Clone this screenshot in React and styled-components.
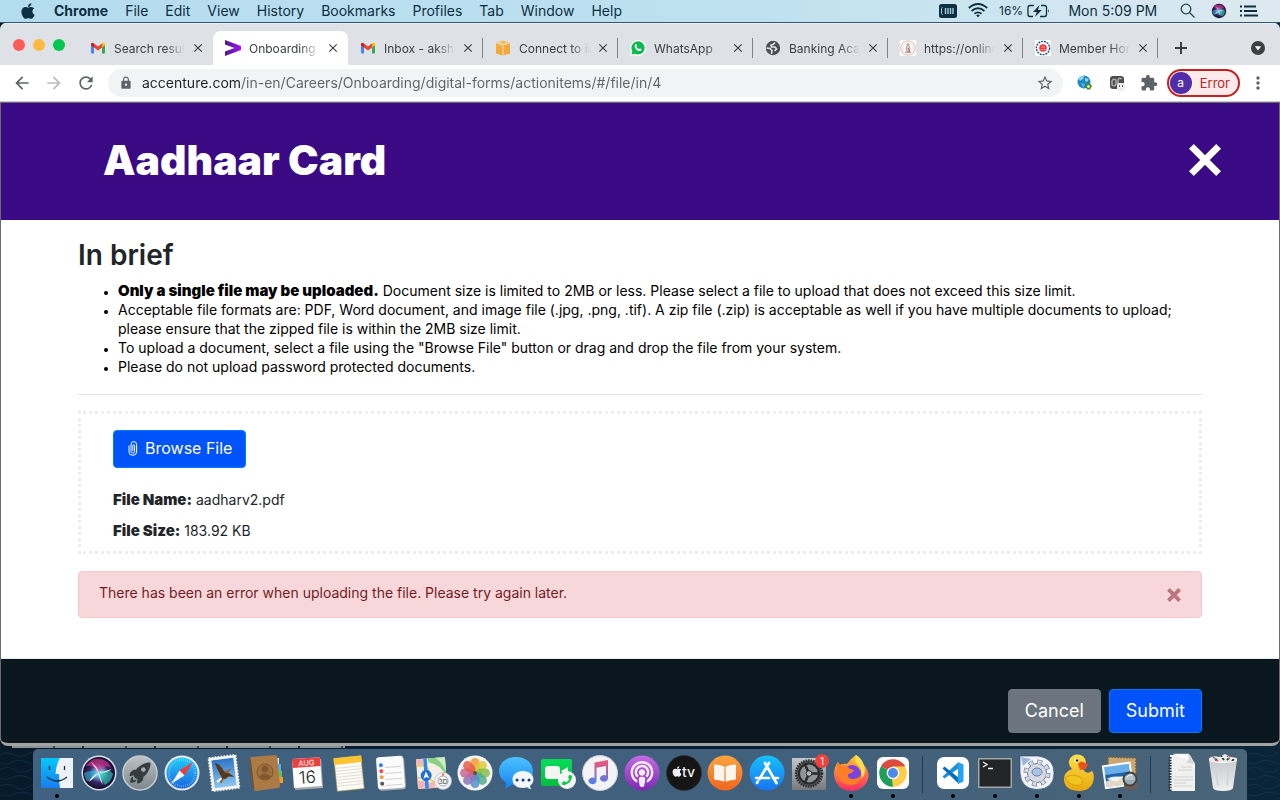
import React from 'react';
import styled, { createGlobalStyle } from 'styled-components';
import { FaApple, FaBookOpen, FaPhoneAlt, FaPodcast } from 'react-icons/fa';
import { IoRocketSharp } from 'react-icons/io5';
import {
    MdArrowBack,
    MdArrowForward,
    MdClose,
    MdExtension,
    MdLock,
    MdMoreVert,
    MdRefresh,
    MdStarBorder,
} from 'react-icons/md';

const GlobalStyle = createGlobalStyle`
    * {
        box-sizing: border-box;
    }
    body {
        margin: 0;
        font-family: Inter, "Liberation Sans", sans-serif;
        font-size: 14px;
        line-height: 19px;
        color: #000;
    }
    button, input {
        font: inherit;
        color: inherit;
        margin: 0;
        padding: 0;
        border: none;
        background: none;
    }
    svg {
        display: block;
        flex: none;
    }
`

const Desktop = styled.div`
    min-height: 100vh;
    display: flex;
    flex-direction: column;
    background: linear-gradient(90deg, #061a2a, #0a2538);
`

/* ---------- menu bar ---------- */

const MenuBar = styled.header`
    height: 23px;
    display: flex;
    align-items: center;
    justify-content: space-between;
    padding: 0 22px 1px 19px;
    color: #0d2f42;
    background: linear-gradient(90deg, #b4dcef, #bfe1ef 60%, #dde9f0);
    border-bottom: 1px solid #2f5672;
`
const MenuGroup = styled.nav`
    display: flex;
    align-items: center;
    gap: ${props => props.$gap};
`
const MenuItem = styled.button`
    display: flex;
    align-items: center;
    font-size: ${props => props.$small ? '12px' : '14px'};
    font-weight: ${props => props.$bold ? 700 : 400};
    white-space: nowrap;
`

/* ---------- browser window ---------- */

const BrowserWindow = styled.div`
    flex: 1;
    display: flex;
    flex-direction: column;
    border-radius: 6px 6px 8px 8px;
    border-bottom: 3px solid #a3a3a1;
    overflow: hidden;
`
const TabStrip = styled.div`
    height: 42px;
    display: flex;
    align-items: flex-end;
    background: #dee1e6;
    border-top: 1px solid #eceef1;
    padding-right: 14px;
`
const TrafficLights = styled.div`
    width: 78px;
    flex: none;
    align-self: center;
    display: flex;
    gap: 8px;
    padding-left: 13px;
`
const Light = styled.button`
    width: 12px;
    height: 12px;
    border-radius: 50%;
    background: ${props => props.$color};
`
const Tab = styled.div`
    flex: 0 1 135px;
    min-width: 0;
    height: 34px;
    display: flex;
    align-items: center;
    padding: 0 7px 0 12px;
    font-size: 12px;
    color: #3c4043;
    border-radius: 8px 8px 0 0;
    background: ${props => props.$active ? '#fff' : 'none'};
`
const TabDivider = styled.span`
    width: 1px;
    height: 20px;
    margin: 0 0 7px -1px;
    background: #808387;
`
const TabTitle = styled.span`
    flex: 1;
    margin: 0 3px 0 8px;
    overflow: hidden;
    white-space: nowrap;
    mask-image: linear-gradient(90deg, #000 70%, transparent 97%);
`
const IconButton = styled.button`
    width: ${props => props.$size};
    height: ${props => props.$size};
    flex: none;
    display: flex;
    align-items: center;
    justify-content: center;
    color: ${props => props.$color || '#3c4043'};
`
const NewTab = styled.div`
    flex: 1;
    height: 34px;
    display: flex;
    align-items: center;
    justify-content: space-between;
    padding-left: 14px;
`
const Toolbar = styled.div`
    height: 37px;
    display: flex;
    align-items: center;
    gap: 8px;
    padding: 0 12px 0 10px;
    background: #fff;
    border-bottom: 1px solid #c9c9cc;
`
const Omnibox = styled.div`
    flex: 1;
    height: 28px;
    display: flex;
    align-items: center;
    gap: 9px;
    padding: 0 6px 0 11px;
    margin: 0 2px;
    border-radius: 14px;
    background: #f1f3f4;
    color: #5f6368;
`
const UrlInput = styled.input`
    flex: 1;
    min-width: 0;
    padding-bottom: 2px;
    outline: none;
    color: transparent;
    background: linear-gradient(90deg, #202124 99px, #5f6368 99px);
    background-clip: text;
`
const ProfileChip = styled.button`
    height: 28px;
    display: flex;
    align-items: center;
    gap: 8px;
    padding: 0 8px 0 1px;
    margin-left: -2px;
    border: 2px solid #c5221f;
    border-radius: 14px;
    background: #fcebea;
    color: #c5221f;
    font-size: 13px;
`
const Avatar = styled.span`
    width: 22px;
    height: 22px;
    border-radius: 50%;
    background: #512da8;
    color: #fff;
    font-size: 12px;
    line-height: 21px;
`

/* ---------- page ---------- */

const Page = styled.main`
    flex: 1;
    display: flex;
    flex-direction: column;
    background: #fff;
    border: 1px solid #6c6a70;
    border-bottom: none;
`
const PageHeader = styled.div`
    height: 117px;
    display: flex;
    align-items: center;
    justify-content: space-between;
    padding: 0 58px 4px 102px;
    background: #390a84;
    color: #fff;
`
const Title = styled.h1`
    margin: 0;
    font-size: 41px;
    line-height: 50px;
    font-weight: 900;
`
const Content = styled.div`
    flex: 1;
    padding: 18px 77px 40px;
    border-bottom: 1px solid #e9ecef;
`
const Heading = styled.h2`
    margin: 0 0 9px;
    font-size: 28px;
    line-height: 34px;
    font-weight: 600;
    color: #212529;
`
const BriefList = styled.ul`
    margin: 0;
    padding-left: 40px;

    li::marker {
        font-size: 11px;
    }
`
const Strong = styled.b`
    font-size: 15px;
    line-height: 14px;
    font-weight: 900;
`
const Rule = styled.hr`
    margin: 18px 0 16px;
    border: none;
    border-top: 1px solid #e2e2e3;
`
const DropZone = styled.section`
    padding: 16px 32px 11px;
    border: 3px dotted #ededee;
    color: #212529;
`
const Button = styled.button`
    height: ${props => props.$large ? '44px' : '38px'};
    display: flex;
    align-items: center;
    gap: 6px;
    padding: 0 ${props => props.$large ? '16px' : '13px'} 2px;
    border: 1px solid ${props => props.$muted ? '#6c757d' : '#007bff'};
    border-radius: 4px;
    background: ${props => props.$muted ? '#6c757d' : '#0052f9'};
    color: #fff;
    font-size: ${props => props.$large ? '18px' : '16px'};
`
const FileDetails = styled.div`
    display: flex;
    flex-direction: column;
    gap: 12px;
    margin-top: 22px;
`
const Alert = styled.div`
    display: flex;
    justify-content: space-between;
    margin-top: 17px;
    padding: 11px 16px 11px 20px;
    border: 1px solid #f5c6cb;
    border-radius: 4px;
    background: #f8d7da;
    color: #721c24;
`
const PageFooter = styled.footer`
    height: 84px;
    display: flex;
    align-items: flex-end;
    justify-content: flex-end;
    gap: 8px;
    padding: 0 77px 10px;
    background: #0b171e;
`

/* ---------- dock ---------- */

const DockRow = styled.div`
    display: flex;
    height: 51px;
    margin-top: 3px;
`
const Sea = styled.svg`
    width: 33px;
    height: 51px;
`
const DockPanel = styled.div`
    flex: 1;
    display: flex;
    padding: 0 3px;
    border-radius: 5px 5px 0 0;
    background: linear-gradient(90deg, #40617f, #40607c 60%, #4a6478);
`
const DockItem = styled.button`
    flex: 1 1 0;
    min-width: 0;
    display: flex;
    flex-direction: column;
    align-items: center;
    gap: 1px;
    padding-top: 4px;
`
const RunningDot = styled.span`
    width: 4px;
    height: 4px;
    border-radius: 50%;
    background: #000;
`
const DockDivider = styled.span`
    width: 1px;
    margin: 7px 9px;
    background: #1c3c56;
`

/* ---------- small icons ---------- */

const Gmail = () => (
    <svg width="16" height="16" viewBox="0 0 16 16">
        <path d="M1 4v8.500q0 1 1 1h2V7z" fill="#4285f4" />
        <path d="M15 4v8.500q0 1-1 1h-2V7z" fill="#34a853" />
        <path d="M12 3.500v4l3-2.200V4q-.6-2-2.300-1z" fill="#fbbc04" />
        <path d="M1 4v1.300L4 7.500v-4l-.8-.600Q1.500 2.200 1 4z" fill="#c5221f" />
        <path d="M4 3.500v4l4 3 4-3v-4l-4 3z" fill="#ea4335" />
    </svg>
)

const Accenture = () => (
    <svg width="16" height="16" viewBox="0 0 16 16">
        <defs>
            <linearGradient id="acc"><stop stopColor="#4a1a86" /><stop offset="1" stopColor="#a414f5" /></linearGradient>
        </defs>
        <path d="M0 0l16 6v4L0 16v-4.500L9.500 8 0 4.500z" fill="url(#acc)" />
    </svg>
)

const Cube = () => (
    <svg width="16" height="16" viewBox="0 0 16 16">
        <path d="M1 3.200L7.500 5v10.500L1 13.500zM15 3.200L8.500 5v10.500l6.500-2z" fill="#f5a938" />
        <path d="M1.500 2.300L8 .5l6.500 1.800L8 4.200z" fill="#f9bd60" />
        <path d="M5.200 2v3.500M10.800 2v3.500" stroke="#fbd69a" />
    </svg>
)

const WhatsApp = () => (
    <svg width="16" height="16" viewBox="0 0 16 16">
        <path d="M0 16l1.200-4.200A8 8 0 1 1 4.300 15z" fill="#fff" />
        <path d="M1.500 14.600l.9-3.200a6.600 6.600 0 1 1 2.400 2.300z" fill="#07bc4c" />
        <path d="M5.300 4.300c.8-.8 1.300-.1 1.700 1.200.2.600-.6.900-.5 1.300.6 1.100 1.300 1.800 2.500 2.300.5.100.8-.9 1.300-.7 1.300.6 1.800.9 1 1.900-1.400 1.600-4.100.3-5.500-1.400-1.100-1.300-1.900-3.200-.5-4.600z" fill="#fff" />
    </svg>
)

const Globe = () => (
    <svg width="16" height="16" viewBox="0 0 16 16">
        <circle cx="8" cy="8" r="7.200" fill="#4b4f54" />
        <path d="M10 2.500L8 4.500l-2 .5.500 2h3.500l1.500 2-2 2M1.500 8l3.500.5 2 2-.5 3.500" fill="none" stroke="#dee1e6" strokeWidth="1.700" />
    </svg>
)

const Emblem = () => (
    <svg width="16" height="16" viewBox="0 0 16 16">
        <path d="M0 0h16v16H0z" fill="#fff" />
        <circle cx="8" cy="8" r="7.200" fill="none" stroke="#d9b8ae" />
        <circle cx="8" cy="8" r="5.300" fill="none" stroke="#ecdcd6" />
        <path d="M7 4h2v2l1 2-.5 3.500h-3L6 8l1-2zM5 12.500h6" fill="#e2cfc9" stroke="#99837e" strokeWidth=".7" />
        <path d="M8 8l2 4" stroke="#b5403a" strokeWidth=".8" />
    </svg>
)

const MemberBadge = () => (
    <svg width="16" height="16" viewBox="0 0 16 16">
        <path d="M0 0h16v16H0z" fill="#fff" />
        <circle cx="8" cy="8" r="6.600" fill="none" stroke="#1f4d9c" strokeWidth="1.400" strokeDasharray="2 .9" />
        <circle cx="8" cy="8" r="3.800" fill="#f0373a" />
        <path d="M6 7h4M5.500 9.500h5" stroke="#fba7a3" strokeWidth=".8" />
    </svg>
)

const Memory = () => (
    <svg width="18" height="14" viewBox="0 0 18 14">
        <rect width="18" height="14" rx="2.500" fill="#0d2f42" />
        <path d="M3.500 3.500q-1 0-1 1v5q0 1 1 1" fill="none" stroke="#a7c9d8" />
        <path d="M6.500 4v6M9 4v6M11.500 4v6M14 4v6" stroke="#a7c9d8" strokeWidth="1.400" />
    </svg>
)

const Wifi = () => (
    <svg width="20" height="15" viewBox="0 0 20 15" fill="none" stroke="#0d2f42" strokeWidth="1.800">
        <path d="M.8 5Q10-3 19.200 5M3.600 8q6.400-5.400 12.800 0M6.500 10.800q3.500-2.800 7 0" />
        <path d="M8.200 12.200q1.800-1.200 3.600 0L10 14.500z" fill="#0d2f42" stroke="none" />
    </svg>
)

const Battery = () => (
    <svg width="23" height="14" viewBox="0 0 23 14">
        <path d="M7 1.500H3Q1 1.500 1 3.500v7q0 2 2 2h3M14 1.500h3.500q2 0 2 2v7q0 2-2 2H13" fill="none" stroke="#0d2f42" strokeWidth="1.300" />
        <path d="M12.500 1L6 8h3.800L8 13l6.800-7H11z" fill="#0d2f42" />
        <path d="M21 5q1.800 2 0 4z" fill="#0d2f42" />
    </svg>
)

const Spotlight = () => (
    <svg width="15" height="15" viewBox="0 0 15 15" fill="none" stroke="#28424f" strokeWidth="1.300">
        <circle cx="6" cy="6" r="4.800" />
        <path d="M9.500 9.500l5 5" />
    </svg>
)

const SiriOrb = ({ size, id }) => (
    <svg width={size} height={size} viewBox="0 0 40 40">
        <defs>
            <radialGradient id={id}>
                <stop stopColor="#fff" /><stop offset=".2" stopColor="#78bfe8" />
                <stop offset=".6" stopColor="#3a2567" /><stop offset="1" stopColor="#130f2c" />
            </radialGradient>
        </defs>
        <circle cx="20" cy="20" r="17.500" fill="#d8dbe3" />
        <circle cx="20" cy="20" r="16" fill={`url(#${id})`} />
        <path d="M7 13q6-9 15-7 8 2 10 9-6-5-12 5-6-9-13-7z" fill="#e8348c" opacity=".6" />
        <path d="M5 20q7-4 15 0-6 9-12 8-3-4-3-8z" fill="#37c3e8" opacity=".55" />
        <path d="M20 20q10-5 14 1-2 8-8 11-5-5-6-12z" fill="#27d7b0" opacity=".6" />
        <path d="M20 20L12 9q6 4 8 11L10 29q3-7 10-9l13-4q-5 4-13 4l4 12q-4-5-4-12z" fill="#fff" opacity=".9" />
    </svg>
)

const MenuList = () => (
    <svg width="19" height="12" viewBox="0 0 19 12">
        <path d="M5 1.500h12M5 6h13M5 10.500h14" stroke="#142d3b" strokeWidth="1.800" />
        <path d="M1 1.500h2M1 6h2M1 10.500h2" stroke="#142d3b" strokeWidth="1.800" />
    </svg>
)

const TabSearch = () => (
    <svg width="14" height="14" viewBox="0 0 14 14">
        <circle cx="7" cy="7" r="7" fill="#3c4043" />
        <path d="M3.800 5.200h6.400L7 9.600z" fill="#fff" />
    </svg>
)

const EarthExtension = () => (
    <svg width="16" height="16" viewBox="0 0 16 16">
        <circle cx="7" cy="7" r="6.500" fill="#1d87c4" />
        <path d="M1.500 4q3-4 6-3L6 4 3 6zM8 3l4 1-2 3-2-1z" fill="#91d2ef" />
        <path d="M4 8l4 1-2 4z" fill="#62b5de" />
        <path d="M8.500 10q2-3 5-1l1.500 2-2 3.500h-3z" fill="#4b8b1b" />
        <circle cx="11.500" cy="11.500" r="1.400" fill="#d8ecb9" />
    </svg>
)

const MaskExtension = () => (
    <svg width="16" height="16" viewBox="0 0 16 16">
        <rect x="1" y="1" width="14" height="13" rx="3" fill="#4d4d4d" />
        <path d="M3 10V6q1.500-3 4-1v4q-1 3-4 1zM13 4q-3-2-4 1v4" fill="none" stroke="#aaa" strokeWidth="1.500" />
        <rect x="8" y="8" width="8" height="8" rx="2" fill="#eee" />
        <path d="M10 11h1M13 11h1" stroke="#333" strokeWidth="1.500" />
    </svg>
)

const PaperClip = () => (
    <svg width="12" height="16" viewBox="0 0 12 16" fill="none" stroke="#fff">
        <path d="M4 5v6.500q0 1.500 1.800 1.500t1.800-1.500V5.500q0-.8-.9-.8t-.9.8V11M2 5.500V12q0 3.300 3.800 3.300T9.600 12V4.500Q9.500 1.500 6.800 1.500 4 1.500 4 5" />
    </svg>
)

const Cross = ({ size, weight }) => (
    <svg width={size} height={size} viewBox="0 0 30 30" stroke="currentColor" strokeWidth={weight}>
        <path d="M3 3l24 24M27 3L3 27" />
    </svg>
)

/* ---------- dock icons, all on a 40 unit square ---------- */

const Glyph = ({ children }) => (
    <svg width="40" height="40" viewBox="0 0 40 40">{children}</svg>
)

const Fade = ({ id, from, to }) => (
    <linearGradient id={id} x2="0" y2="1"><stop stopColor={from} /><stop offset="1" stopColor={to} /></linearGradient>
)

const Finder = () => (
    <Glyph>
        <Fade id="finder" from="#05c8fb" to="#1a7df0" />
        <path d="M4 5h32v30H4z" fill="#eef1f8" />
        <path d="M4 5h19q-4 7-4.500 16H22q0 8 1 14H4z" fill="url(#finder)" />
        <path d="M12.500 13v4M27.500 13v4M10 24q10 8 20 0" fill="none" stroke="#142b43" strokeWidth="1.300" />
    </Glyph>
)

const Launchpad = () => (
    <Glyph>
        <Fade id="pad" from="#bcc3c6" to="#7d868b" />
        <circle cx="20" cy="20" r="17" fill="url(#pad)" stroke="#c5cbcd" strokeWidth="1.500" />
        <IoRocketSharp x="8" y="8" size="24" color="#363b40" />
    </Glyph>
)

const Safari = () => (
    <Glyph>
        <Fade id="safari" from="#21cefa" to="#1b64df" />
        <circle cx="20" cy="20" r="17.500" fill="#e6eaed" />
        <circle cx="20" cy="20" r="15.500" fill="url(#safari)" />
        <circle cx="20" cy="20" r="13.200" fill="none" stroke="#9fdcf8" strokeWidth="2" strokeDasharray=".5 1.600" />
        <path d="M31 9L17.500 17.500l5 5z" fill="#f43b37" />
        <path d="M9 31l8.500-13.500 5 5z" fill="#f3f3f3" />
    </Glyph>
)

const MailStamp = () => (
    <Glyph>
        <Fade id="stamp" from="#2d74c8" to="#8fc6ef" />
        <g transform="rotate(-7 20 20)">
            <rect x="6.500" y="3.500" width="27" height="33" fill="#f6f6f4" stroke="#f6f6f4" strokeWidth="2" strokeDasharray="1.800 1.200" />
            <path d="M9 6h22v28H9z" fill="url(#stamp)" />
            <path d="M12 9q5 1 8 9l4 2 6 5-6-1-3 2-6 1 2-3q-3-7-5-15z" fill="#55381e" />
            <path d="M20 19l8-3-4 5zM14 27l6-2-4 5z" fill="#8c6a3f" />
            <path d="M12 28l5-3" stroke="#fff" strokeWidth="2" />
        </g>
    </Glyph>
)

const Contacts = () => (
    <Glyph>
        <path d="M29 5h4v7h-3z" fill="#dae3e9" />
        <path d="M30 11h5v7h-5z" fill="#49b4e3" />
        <path d="M31 18h5v6h-5z" fill="#6cbf52" />
        <path d="M32 24h5v6h-5z" fill="#f39a2c" />
        <path d="M5 4l24-2q2 0 2.300 2l2.700 29q0 2-2 2l-22 3q-2 0-2.300-2L4 6q0-1.500 1-2z" fill="#ab7a45" />
        <path d="M4 6l3.700 30" stroke="#74502b" strokeWidth="1.500" />
        <circle cx="19" cy="19" r="8" fill="#a07040" stroke="#825a30" />
        <circle cx="19" cy="16" r="3.300" fill="#80582f" />
        <path d="M12.500 24q6.500-7 13 0-6 5-13 0z" fill="#80582f" />
    </Glyph>
)

const Calendar = () => (
    <Glyph>
        <g transform="rotate(-4 20 20)">
            <path d="M6 7h28v29H6z" fill="#a8a9aa" />
            <path d="M5 5h28v29H5z" fill="#fcfcfc" />
            <path d="M5 5h28v9H5z" fill="#e8413f" />
            <text x="19" y="12.500" textAnchor="middle" fontSize="7.500" fill="#fff">AUG</text>
            <text x="19" y="30" textAnchor="middle" fontSize="17" fontWeight="300" fill="#222">16</text>
        </g>
    </Glyph>
)

const Notes = () => (
    <Glyph>
        <g transform="rotate(-6 20 20)">
            <path d="M6.500 4h27v33h-27z" fill="#fcfbf4" stroke="#b39a50" strokeWidth=".6" />
            <path d="M6 4h28v6.500H6z" fill="#fbc531" />
            <path d="M7 14h26M7 17h26M7 20h26M7 23h26M7 26h26M7 29h26M7 32h26" stroke="#d9d8d0" strokeWidth=".8" />
        </g>
    </Glyph>
)

const Reminders = () => (
    <Glyph>
        <g transform="rotate(-4 20 20)">
            <rect x="7" y="5" width="27" height="32" rx="2.500" fill="#a9adb3" />
            <rect x="6" y="3.500" width="27" height="32" rx="2.500" fill="#fbfbfc" />
            <path d="M14 14h17M14 20h17M14 26h17M14 32h17" stroke="#d4d4d8" />
            <circle cx="10.500" cy="11.500" r="2" fill="#2e7ff5" />
            <circle cx="10.500" cy="17.500" r="2" fill="#f34b43" />
            <circle cx="10.500" cy="23.500" r="2" fill="#f89d2e" />
            <circle cx="10.500" cy="30" r="2" fill="#54565b" />
        </g>
    </Glyph>
)

const Maps = () => (
    <Glyph>
        <g transform="rotate(-4 20 20)">
            <path d="M4 5h29v30H4z" fill="#f4efe6" />
            <path d="M16 5h17v20q-4-13-17-16z" fill="#8ad083" />
            <path d="M23 5h10v14q-3-9-10-14z" fill="#cfeac2" />
            <path d="M4 5h7v6H4zM4 27h7v8H4zM14 29h7v6h-7z" fill="#f3b7b5" />
            <path d="M4 24q14-2 20 11M4 12h10l3 9" fill="none" stroke="#f1c549" strokeWidth="1.500" />
            <path d="M13 5v30" stroke="#2e88e8" strokeWidth="3.500" />
            <circle cx="13" cy="22" r="5.500" fill="#1b6fd6" />
            <path d="M13 18l3 7-3-1.500-3 1.500z" fill="#fff" />
        </g>
        <circle cx="30" cy="28" r="8.500" fill="#f2f2f4" stroke="#b9c1c8" strokeWidth=".7" />
        <circle cx="30" cy="28" r="5" fill="#fff" stroke="#7b858e" strokeWidth=".7" />
        <text x="30" y="30.500" textAnchor="middle" fontSize="6.500" fill="#333">3D</text>
        <path d="M30 20.500v2" stroke="#f0352d" strokeWidth="1.500" />
    </Glyph>
)

const petals = ['#f89a2d', '#d8cd38', '#8bbf4a', '#55ac8e', '#4f92cf', '#8b74b8', '#c2679b', '#e85a4a']

const Photos = () => (
    <Glyph>
        <circle cx="20" cy="20" r="17.500" fill="#f5f4f2" />
        {petals.map((color, i) => (
            <rect key={color} x="15.500" y="5" width="9" height="14" rx="4.500" fill={color} opacity=".85" transform={`rotate(${i * 45} 20 20)`} />
        ))}
        <circle cx="20" cy="20" r="2" fill="#5f4b3c" />
    </Glyph>
)

const Messages = () => (
    <Glyph>
        <Fade id="msg" from="#4cc1fc" to="#1685f5" />
        <path d="M20 4c10 0 17 6 17 14s-7 14-17 14q-3 0-5-.6-2 3-6.500 4 2-3 1.500-6-7-4-7-11.400C3 10 10 4 20 4z" fill="url(#msg)" />
        <path d="M27 18c6 0 10.500 3.500 10.500 8.500 0 3-2 5-3.500 6.200q0 2 1.500 3.500-3-.5-4.500-2-2 .8-4 .8c-6 0-10.500-3.500-10.500-8.500S21 18 27 18z" fill="#f3f7fb" />
        <path d="M21 27h.1M27 27h.1M33 27h.1" stroke="#13427a" strokeWidth="3" strokeLinecap="round" />
    </Glyph>
)

const FaceTime = () => (
    <Glyph>
        <Fade id="face" from="#06dd58" to="#05bd3e" />
        <rect x="3" y="6" width="31" height="27" rx="2" fill="url(#face)" />
        <rect x="7" y="13" width="15" height="13" rx="3" fill="#f3f5f3" />
        <path d="M23 18l7-4v11z" fill="#f3f5f3" />
        <circle cx="29" cy="27" r="9" fill="#f5f6f5" />
        <g transform="matrix(-1 0 0 1 58 0)">
            <FaPhoneAlt x="24" y="22" size="10" color="#0ac847" />
        </g>
    </Glyph>
)

const Music = () => (
    <Glyph>
        <Fade id="note" from="#f7536f" to="#4a81f1" />
        <circle cx="20" cy="20" r="17.500" fill="#f3f2f5" stroke="#c6ccd8" strokeWidth="1" />
        <path d="M14.500 9.500L28 7v18.500a4 3.300 0 1 1-2-3V13l-9.500 1.800V28a4 3.300 0 1 1-2-3z" fill="url(#note)" />
    </Glyph>
)

const Podcasts = () => (
    <Glyph>
        <Fade id="pod" from="#c66be4" to="#7d29b4" />
        <circle cx="20" cy="20" r="17.500" fill="url(#pod)" />
        <FaPodcast x="7" y="8" size="26" color="#f5eafa" />
    </Glyph>
)

const AppleTv = () => (
    <Glyph>
        <circle cx="20" cy="20" r="17.500" fill="#151515" stroke="#333" strokeWidth=".6" />
        <FaApple x="7" y="12.500" size="12" color="#f0f0f0" />
        <text x="18" y="24" fontSize="14" fontWeight="500" fill="#f0f0f0">tv</text>
    </Glyph>
)

const Books = () => (
    <Glyph>
        <Fade id="books" from="#fda53c" to="#ee6620" />
        <circle cx="20" cy="20" r="17.500" fill="url(#books)" />
        <FaBookOpen x="9" y="9" size="22" color="#fbf4ef" />
    </Glyph>
)

const AppStore = () => (
    <Glyph>
        <Fade id="store" from="#17c0fc" to="#1975f1" />
        <circle cx="20" cy="20" r="17.500" fill="url(#store)" />
        <path d="M9 25h13M26 25h5M22 10l-9.500 16M10.800 28.500l-.8 1.400M18 10l11.500 20" stroke="#fff" strokeWidth="2.700" strokeLinecap="round" />
    </Glyph>
)

const Settings = () => (
    <Glyph>
        <Fade id="prefs" from="#c3c7c9" to="#77797b" />
        <path d="M3 5h34v32H3z" fill="url(#prefs)" />
        <circle cx="20" cy="20.500" r="13" fill="#55585a" stroke="#2a2c2e" strokeWidth="2.500" strokeDasharray="1.500 1" />
        <circle cx="20" cy="20.500" r="10" fill="#919496" stroke="#27292b" strokeWidth="2" />
        <path d="M20 20.500l-4-9M20 20.500h10M20 20.500l-4 9" stroke="#292b2d" strokeWidth="2.500" />
        <circle cx="20" cy="20.500" r="2.800" fill="#b4b7b9" stroke="#292b2d" />
        <circle cx="33" cy="8" r="7" fill="#f1403d" />
        <text x="33" y="11.500" textAnchor="middle" fontSize="10" fill="#fff">1</text>
    </Glyph>
)

const Firefox = () => (
    <Glyph>
        <Fade id="fox" from="#ffc82f" to="#fb2c62" />
        <path d="M25 2q6 4 7 9 6 6 5.500 13Q35 36.500 20.500 38 5 37 3 22q0-8 4-13l2 3q3-2 7-1 3-5 9-9z" fill="url(#fox)" />
        <circle cx="21" cy="21" r="9" fill="#7744df" />
        <path d="M6 10l4 3q5-2 9 3l4 1q-1 3-6 4-1 5 5 5 5 0 8-4-1 10-11 10Q8 31 6 20z" fill="#ff7d25" />
        <path d="M25 2q-3 6 2 10 5 6 3 14 4-4 4-9Q33 7 25 2z" fill="#ffe04c" />
    </Glyph>
)

const Chrome = () => (
    <Glyph>
        <rect x="4" y="4" width="32" height="32" rx="6" fill="#fcfcfc" />
        <path d="M20 20L8 13.200A13.800 13.800 0 0 1 32 13.200z" fill="#dd4b3e" />
        <path d="M20 20L8 13.200a13.800 13.800 0 0 0 12 20.600z" fill="#1f9d59" />
        <path d="M20 20L32 13.200a13.800 13.800 0 0 1-12 20.600z" fill="#fdce48" />
        <path d="M20 13.200h12L26 20l-6-2z" fill="#fdce48" />
        <path d="M20 13.200h12.100l-1.200-1.700H18z" fill="#dd4b3e" />
        <path d="M14 23.500L8 13.200l7 5z" fill="#1f9d59" />
        <path d="M26 23.500l-6 10.300-1-7z" fill="#fdce48" />
        <circle cx="20" cy="20" r="6.300" fill="#fff" />
        <circle cx="20" cy="20" r="5" fill="#4b89ee" />
    </Glyph>
)

const VsCode = () => (
    <Glyph>
        <rect x="4" y="4" width="32" height="32" rx="7" fill="#fff" />
        <path d="M25 9.500L9.500 23.500l2 2L26 15z" fill="#1f8fdb" />
        <path d="M9.500 15.500l2-2L26 25v6z" fill="#0a6dba" />
        <path d="M25 9l5.500 2.500v17L25 31z" fill="#24a3ef" />
    </Glyph>
)

const Terminal = () => (
    <Glyph>
        <rect x="3" y="5" width="34" height="30" rx="1" fill="#a4a8a9" />
        <path d="M4.500 6.500h31v27h-31z" fill="#222425" />
        <path d="M8 9l4 2.500L8 14M13 15.500h5" fill="none" stroke="#f3f3f3" strokeWidth="1.300" />
    </Glyph>
)

const Automation = () => (
    <Glyph>
        <path d="M3 3h18q16 2 16 17 0 16-17 16.500Q4 36 3 20z" fill="#f1f4f9" stroke="#364f77" strokeWidth=".7" />
        <path d="M4 4l10 2-8 7z" fill="#9bb6df" />
        <circle cx="20" cy="20" r="11" fill="none" stroke="#737e92" strokeWidth="5" strokeDasharray="4.600 4.040" />
        <circle cx="20" cy="20" r="9.500" fill="#d4d9e4" stroke="#737e92" />
        <circle cx="20" cy="20" r="11" fill="none" stroke="#d4d9e4" strokeWidth="3.800" strokeDasharray="3.400 5.240" strokeDashoffset="-.6" />
        <ellipse cx="20" cy="19" rx="5" ry="4" fill="#a8c5e9" stroke="#717d94" />
    </Glyph>
)

const Duck = () => (
    <Glyph>
        <Fade id="duck" from="#fde047" to="#e9a70d" />
        <path d="M18 1.500q8 0 9 8 0 5-3 7 3 4 6 3t3-2q3 5 1 12-3 8-13 8.500Q6 38 5 27q-.5-8 8-11-4-4-3-8 1.500-6 8-6.500z" fill="url(#duck)" />
        <path d="M6 25q8-6 16 0 3 4-1 7-9 2-15-7z" fill="#f3c51f" stroke="#d1960f" strokeWidth=".8" />
        <path d="M19 11q2-3 5-2l5 2-2 5-6 1z" fill="#e9541c" />
        <circle cx="17.500" cy="7.500" r="2" fill="#fff" />
        <circle cx="18" cy="7.500" r="1.200" fill="#2c1a05" />
    </Glyph>
)

const Preview = () => (
    <Glyph>
        <path d="M8 4l28 1v26H8z" fill="#c9a773" stroke="#7e6238" strokeWidth="1.500" strokeDasharray="2 1" />
        <g transform="rotate(-8 20 20)">
            <path d="M3 10h29v24H3z" fill="#fafafa" />
            <path d="M5 12h25v20H5z" fill="#68aee8" />
            <path d="M5 20h25v6H5z" fill="#1f64ab" />
            <path d="M5 27q10-5 25-3v8H5z" fill="#e5d9c4" />
            <path d="M6 24q8-3 17 1l-8 3z" fill="#eef5fa" />
        </g>
        <path d="M24 27h13v8q-6 4-13 0z" fill="#6f5e50" />
        <circle cx="30" cy="26" r="6.500" fill="#a7bccb" fillOpacity=".8" stroke="#3c4247" strokeWidth="2" />
        <path d="M27 24q2-3 5-2" stroke="#fff" fill="none" />
    </Glyph>
)

const Documents = () => (
    <Glyph>
        <path d="M9 2h20l5 9v27H9z" fill="#f1f1f0" />
        <path d="M12 1h16v9h6" fill="#fff" stroke="#cfcfcf" strokeWidth=".7" />
        <path d="M28 2l6 10q-2-3-9-2 4-3 3-8z" fill="#d6d6d4" />
        <path d="M20 14h11M17 17h14M13 24h19M13 27h19M13 30h12M13 33h18" stroke="#c9c9c9" strokeWidth=".8" />
        <path d="M9 4v34" stroke="#27323b" strokeWidth="3" strokeDasharray="1.500 1.200" />
    </Glyph>
)

const Trash = () => (
    <Glyph>
        <Fade id="trash" from="#c6cbce" to="#eff0f0" />
        <path d="M6 5l5-2 5 1 6-3 6 3 6 1-2 6H8z" fill="#e6e8e9" />
        <path d="M10 4l4 3M18 3l3 4M27 4l-3 3M31 6l-2 2" stroke="#32373b" strokeWidth="1.800" />
        <path d="M12 7l3 1M24 3l2 2" stroke="#d5533f" strokeWidth="1.500" />
        <path d="M6 7q14 5 28 0l-4 28q-1 3-10 3t-10-3z" fill="url(#trash)" />
        <path d="M12 13l3 20M26 14l-2 18" stroke="#d0d4d6" strokeWidth="1.500" />
        <ellipse cx="20" cy="7" rx="14" ry="2.500" fill="none" stroke="#f8f8f8" />
    </Glyph>
)

const Waves = () => (
    <Sea viewBox="0 0 33 51" preserveAspectRatio="none">
        <path d="M0 6q7-4 14 0t18-3M0 13q5 4 12 0t20 2M0 21q8-5 15 0t17-1M0 29q5 3 13-1t20 3M0 37q9-4 15 1t18-2M0 45q6 4 14 0t19 1" fill="none" stroke="#214761" opacity=".4" />
    </Sea>
)

const BackWindow = styled.div`
    height: 2px;
    width: 26%;
    margin: 0 0 -2px 12px;
    background: repeating-linear-gradient(90deg, #8b9297 0 41px, #3b454d 41px 43px, #8b9297 43px 70px, #202b34 70px 72px);
`

/* ---------- data ---------- */

const menus = ['File', 'Edit', 'View', 'History', 'Bookmarks', 'Profiles', 'Tab', 'Window', 'Help']

const tabs = [
    { title: 'Search results', Icon: Gmail },
    { title: 'Onboarding A', Icon: Accenture, active: true },
    { title: 'Inbox - akshay', Icon: Gmail, divider: true },
    { title: 'Connect to ins', Icon: Cube, divider: true },
    { title: 'WhatsApp', Icon: WhatsApp, divider: true },
    { title: 'Banking Acad', Icon: Globe, divider: true },
    { title: 'https://online', Icon: Emblem, divider: true },
    { title: 'Member Home', Icon: MemberBadge, divider: true },
]

const SiriApp = () => <SiriOrb size="40" id="siriDock" />

const dock = [
    [
        ['Finder', Finder, true], ['Siri', SiriApp], ['Launchpad', Launchpad], ['Safari', Safari],
        ['Mail', MailStamp], ['Contacts', Contacts], ['Calendar', Calendar], ['Notes', Notes],
        ['Reminders', Reminders], ['Maps', Maps], ['Photos', Photos], ['Messages', Messages],
        ['FaceTime', FaceTime], ['Music', Music], ['Podcasts', Podcasts], ['TV', AppleTv],
        ['Books', Books], ['App Store', AppStore], ['System Preferences', Settings],
        ['Firefox', Firefox, true], ['Chrome', Chrome, true],
    ],
    [
        ['Code', VsCode, true], ['Terminal', Terminal, true], ['Automation', Automation, true],
        ['Cyberduck', Duck, true], ['Preview', Preview, true],
    ],
    [['Documents', Documents], ['Trash', Trash]],
]

const App = () => {
    return (
        <Desktop>
            <GlobalStyle />
            <MenuBar>
                <MenuGroup $gap="17px">
                    <MenuItem aria-label="Apple"><FaApple size={18} /></MenuItem>
                    <MenuItem $bold>Chrome</MenuItem>
                    {menus.map(name => <MenuItem key={name}>{name}</MenuItem>)}
                </MenuGroup>
                <MenuGroup $gap="11px">
                    <MenuItem aria-label="Memory"><Memory /></MenuItem>
                    <MenuItem aria-label="Wi-Fi"><Wifi /></MenuItem>
                    <MenuItem $small>16%&nbsp;<Battery /></MenuItem>
                    <MenuItem>&nbsp;&nbsp;Mon 5:09 PM&nbsp;&nbsp;&nbsp;</MenuItem>
                    <MenuItem aria-label="Search"><Spotlight /></MenuItem>
                    <MenuItem aria-label="Siri">&nbsp;<SiriOrb size="18" id="siriMenu" /></MenuItem>
                    <MenuItem aria-label="Notifications"><MenuList /></MenuItem>
                </MenuGroup>
            </MenuBar>

            <BrowserWindow>
                <TabStrip>
                    <TrafficLights>
                        <Light $color="#fc5b57" aria-label="Close window" />
                        <Light $color="#fdb941" aria-label="Minimise" />
                        <Light $color="#05c650" aria-label="Zoom" />
                    </TrafficLights>
                    {tabs.map(({ title, Icon, active, divider }) => (
                        <React.Fragment key={title}>
                            <Tab $active={active}>
                                <Icon />
                                <TabTitle>{title}</TabTitle>
                                <IconButton $size="16px" aria-label="Close tab"><MdClose size={14} /></IconButton>
                            </Tab>
                            {divider && <TabDivider />}
                        </React.Fragment>
                    ))}
                    <NewTab>
                        <IconButton $size="18px" aria-label="New tab">
                            <svg width="12" height="12" viewBox="0 0 12 12" stroke="#3c4043" strokeWidth="2">
                                <path d="M6 0v12M0 6h12" />
                            </svg>
                        </IconButton>
                        <IconButton $size="16px" aria-label="Search tabs"><TabSearch /></IconButton>
                    </NewTab>
                </TabStrip>
                <Toolbar>
                    <IconButton $size="24px" $color="#5f6368" aria-label="Back"><MdArrowBack size={20} /></IconButton>
                    <IconButton $size="24px" $color="#b9bbbe" aria-label="Forward"><MdArrowForward size={20} /></IconButton>
                    <IconButton $size="24px" $color="#5f6368" aria-label="Reload"><MdRefresh size={20} /></IconButton>
                    <Omnibox>
                        <MdLock size={14} />
                        <UrlInput
                            aria-label="Address"
                            defaultValue="accenture.com/in-en/Careers/Onboarding/digital-forms/actionitems/#/file/in/4"
                        />
                        <IconButton $size="24px" $color="#5f6368" aria-label="Bookmark"><MdStarBorder size={18} /></IconButton>
                    </Omnibox>
                    <IconButton $size="24px" aria-label="Translate"><EarthExtension /></IconButton>
                    <IconButton $size="24px" aria-label="Mask"><MaskExtension /></IconButton>
                    <IconButton $size="24px" $color="#5f6368" aria-label="Extensions"><MdExtension size={18} /></IconButton>
                    <ProfileChip><Avatar>a</Avatar>Error</ProfileChip>
                    <IconButton $size="20px" $color="#5f6368" aria-label="More"><MdMoreVert size={20} /></IconButton>
                </Toolbar>

                <Page>
                    <PageHeader>
                        <Title>Aadhaar Card</Title>
                        <IconButton $size="32px" $color="#fff" aria-label="Close"><Cross size="34" weight="6" /></IconButton>
                    </PageHeader>
                    <Content>
                        <Heading>In brief</Heading>
                        <BriefList>
                            <li><Strong>Only a single file may be uploaded.</Strong> Document size is limited to 2MB or less. Please select a file to upload that does not exceed this size limit.</li>
                            <li>Acceptable file formats are: PDF, Word document, and image file (.jpg, .png, .tif). A zip file (.zip) is acceptable as well if you have multiple documents to upload; please ensure that the zipped file is within the 2MB size limit.</li>
                            <li>To upload a document, select a file using the "Browse File" button or drag and drop the file from your system.</li>
                            <li>Please do not upload password protected documents.</li>
                        </BriefList>
                        <Rule />
                        <DropZone>
                            <Button><PaperClip />Browse File</Button>
                            <FileDetails>
                                <span><Strong>File Name:</Strong> aadharv2.pdf</span>
                                <span><Strong>File Size:</Strong> 183.92 KB</span>
                            </FileDetails>
                        </DropZone>
                        <Alert role="alert">
                            There has been an error when uploading the file. Please try again later.
                            <IconButton $size="23px" $color="#b97580" aria-label="Dismiss"><Cross size="14" weight="8" /></IconButton>
                        </Alert>
                    </Content>
                    <PageFooter>
                        <Button $large $muted>Cancel</Button>
                        <Button $large>Submit</Button>
                    </PageFooter>
                </Page>
            </BrowserWindow>

            <BackWindow />
            <DockRow>
                <Waves />
                <DockPanel>
                    {dock.map((group, i) => (
                        <React.Fragment key={i}>
                            {i > 0 && <DockDivider />}
                            {group.map(([name, Icon, running]) => (
                                <DockItem key={name} aria-label={name}>
                                    <Icon />
                                    {running && <RunningDot />}
                                </DockItem>
                            ))}
                        </React.Fragment>
                    ))}
                </DockPanel>
                <Waves />
            </DockRow>
        </Desktop>
    );
};

export default App;
